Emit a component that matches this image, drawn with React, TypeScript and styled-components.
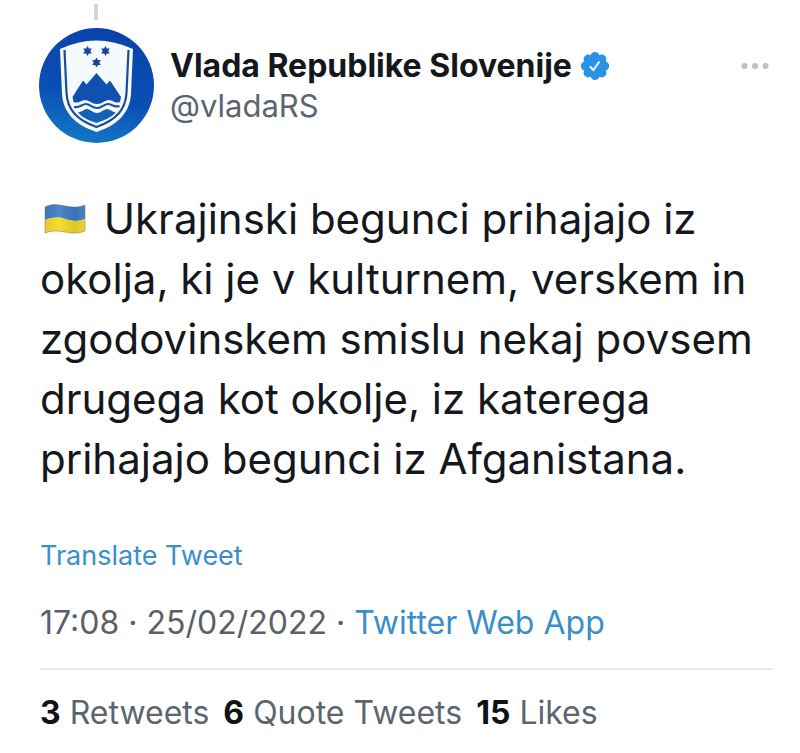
import React from "react";
import styled, { createGlobalStyle } from "styled-components";

const GlobalStyle = createGlobalStyle`
  * { box-sizing: border-box; }
  body {
    margin: 0;
    background: #fff;
    color: #14171c;
    font-family: Inter, "Liberation Sans", sans-serif;
  }
`;

const Tweet = styled.article`
  padding: 4px 27px 20px 40px;
`;

const ThreadLine = styled.div`
  width: 4px;
  height: 16px;
  margin-left: 54px;
  background: #d3d6db;
`;

const Header = styled.header`
  display: flex;
  align-items: flex-start;
  gap: 16px;
  margin-top: 8px;
`;

const AvatarLink = styled.a`
  flex: none;
  display: block;
  width: 115px;
  height: 115px;
  margin-left: -1px;

  svg { display: block; }
`;

const Author = styled.div`
  flex: 1;
  min-width: 0;
  padding-top: 18px;
`;

const NameRow = styled.div`
  display: flex;
  align-items: center;
  gap: 8px;
`;

const Name = styled.a`
  color: #14171c;
  font-size: 32px;
  font-weight: 700;
  line-height: 40px;
  text-decoration: none;
  white-space: nowrap;
`;

const Handle = styled.div`
  color: #5b6570;
  font-size: 31px;
  line-height: 40px;
`;

const MoreButton = styled.button`
  display: flex;
  margin: 30px 4px 0 0;
  padding: 4px 0;
  border: 0;
  background: none;
  cursor: pointer;
`;

const Body = styled.p`
  margin: 46px 0 0;
  font-size: 42px;
  font-weight: 400;
  line-height: 60px;

  svg {
    margin: 0 6px 0 4px;
    vertical-align: 0;
  }
`;

const TextLink = styled.a`
  color: #3a8fc7;
  text-decoration: none;
`;

const Translate = styled.div`
  margin-top: 47px;
  font-size: 27px;
  line-height: 40px;
`;

const Meta = styled.div`
  margin-top: 27px;
  padding-bottom: 25px;
  border-bottom: 2px solid #e6e8ea;
  color: #5b6068;
  font-size: 32px;
  line-height: 40px;
`;

const Stats = styled.div`
  display: flex;
  flex-wrap: wrap;
  gap: 14px;
  margin-top: 23px;
`;

const Stat = styled.a`
  color: #5b6570;
  font-size: 32px;
  line-height: 40px;
  text-decoration: none;

  strong {
    color: #101215;
    font-weight: 700;
  }
`;

const Star = ({ x, y }: { x: number; y: number }) => (
  <path
    transform={`translate(${x} ${y})`}
    fill="#17479b"
    d="M0-5 1.4-2.4 4.3-2.5 2.8 0 4.3 2.5 1.4 2.4 0 5-1.4 2.4-4.3 2.5-2.8 0-4.3-2.5-1.4-2.4Z"
  />
);

const Crest = () => (
  <svg width="115" height="115" viewBox="0 0 115 115" aria-hidden="true">
    <defs>
      <linearGradient id="disc" x1="0.6" y1="0" x2="0.4" y2="1">
        <stop offset="0" stopColor="#0b42a8" />
        <stop offset="0.6" stopColor="#0a4fb5" />
        <stop offset="1" stopColor="#1379c4" />
      </linearGradient>
    </defs>
    <circle cx="57.5" cy="57.5" r="57.5" fill="url(#disc)" />
    <path d="M21 21Q57 4 94 21L92 66C91 84 79 97 57.5 104C36 97 24 84 23 66Z" fill="#f4fafd" />
    <path d="M25.5 22L27.5 65C28.5 82 38 92 57.5 99C77 92 86.5 82 87.5 65L89.5 22" fill="none" stroke="#1b4d96" strokeWidth="2.2" />
    <Star x={48.5} y={23} />
    <Star x={66.5} y={23} />
    <Star x={57.5} y={34.5} />
    <path d="M33.5 69L44 52.5 47.5 56.5 57.5 45 67.5 56.5 71 52.5 82 69 81 74C76 76 74 72 70 72S63 76 58 76 50 72 46 72 40 76 34.5 74Z" fill="#0f50b0" />
    <path d="M35 79C41 80 43 76 47 76S53 80 58 80 65 76 69 76 75 80 80.5 78" fill="none" stroke="#1a519f" strokeWidth="2.2" />
    <path d="M39 84.5C44 83.5 45 81 48 81S54 85 58 85 65 81 68 81 73 84 77 84.5C72 89.5 65 92.5 57.5 95 50 92.5 43 89.5 39 84.5Z" fill="#1262b5" />
  </svg>
);

const VerifiedIcon = () => (
  <svg width="30" height="30" viewBox="0 0 30 30" role="img" aria-label="Verified account">
    <g fill="#2b93e6">
      <circle cx="15" cy="15" r="11.5" />
      <circle cx="15" cy="5.5" r="4.5" />
      <circle cx="21.9" cy="8.1" r="4.5" />
      <circle cx="24.7" cy="15" r="4.5" />
      <circle cx="21.9" cy="21.9" r="4.5" />
      <circle cx="15" cy="24.5" r="4.5" />
      <circle cx="8.1" cy="21.9" r="4.5" />
      <circle cx="5.3" cy="15" r="4.5" />
      <circle cx="8.1" cy="8.1" r="4.5" />
    </g>
    <path d="M9.8 15.5 13.4 19 19.5 10.5" fill="none" stroke="#f2faff" strokeWidth="2" />
  </svg>
);

const MoreIcon = () => (
  <svg width="28" height="8" viewBox="0 0 28 8" fill="#bfc1c9" aria-hidden="true">
    <circle cx="3.5" cy="4" r="3" />
    <circle cx="14" cy="4" r="3" />
    <circle cx="24.5" cy="4" r="3" />
  </svg>
);

const UkraineFlag = () => (
  <svg width="42" height="30" viewBox="0 0 42 30" role="img" aria-label="Flag of Ukraine">
    <defs>
      <linearGradient id="blue" x1="0" y1="0" x2="1" y2="0">
        <stop offset="0" stopColor="#3f74b8" />
        <stop offset="0.35" stopColor="#4c86cc" />
        <stop offset="0.75" stopColor="#3b70b4" />
        <stop offset="1" stopColor="#4a7fc0" />
      </linearGradient>
      <linearGradient id="yellow" x1="0" y1="0" x2="1" y2="0">
        <stop offset="0" stopColor="#e3cb2b" />
        <stop offset="0.35" stopColor="#f3dd35" />
        <stop offset="0.75" stopColor="#dfc525" />
        <stop offset="1" stopColor="#ead43c" />
      </linearGradient>
    </defs>
    <path d="M1 3C9-1 15 1 21 2S34 4 41 1V15C34 18 27 17 21 15S9 13 1 16Z" fill="url(#blue)" />
    <path d="M1 16C9 13 15 13 21 15S34 18 41 15V27C34 30 27 29 21 28S9 26 1 29Z" fill="url(#yellow)" />
    <path d="M1 3C9-1 15 1 21 2S34 4 41 1V27C34 30 27 29 21 28S9 26 1 29Z" fill="none" stroke="#74735c" strokeOpacity="0.5" />
  </svg>
);

const stats = [
  { count: 3, label: "Retweets" },
  { count: 6, label: "Quote Tweets" },
  { count: 15, label: "Likes" },
];

export default function App() {
  return (
    <>
      <GlobalStyle />
      <Tweet>
        <ThreadLine />
        <Header>
          <AvatarLink href="#profile" aria-label="Vlada Republike Slovenije">
            <Crest />
          </AvatarLink>
          <Author>
            <NameRow>
              <Name href="#profile">Vlada Republike Slovenije</Name>
              <VerifiedIcon />
            </NameRow>
            <Handle>@vladaRS</Handle>
          </Author>
          <MoreButton type="button" aria-label="More">
            <MoreIcon />
          </MoreButton>
        </Header>
        <Body lang="sl">
          <UkraineFlag /> Ukrajinski begunci prihajajo iz okolja, ki je v kulturnem, verskem in
          zgodovinskem smislu nekaj povsem drugega kot okolje, iz katerega prihajajo begunci iz
          Afganistana.
        </Body>
        <Translate>
          <TextLink href="#translate">Translate Tweet</TextLink>
        </Translate>
        <Meta>
          <time dateTime="2022-02-25T17:08">17:08 · 25/02/2022</time> ·{" "}
          <TextLink href="#source">Twitter Web App</TextLink>
        </Meta>
        <Stats>
          {stats.map((s) => (
            <Stat key={s.label} href="#stats">
              <strong>{s.count}</strong> {s.label}
            </Stat>
          ))}
        </Stats>
      </Tweet>
    </>
  );
}
